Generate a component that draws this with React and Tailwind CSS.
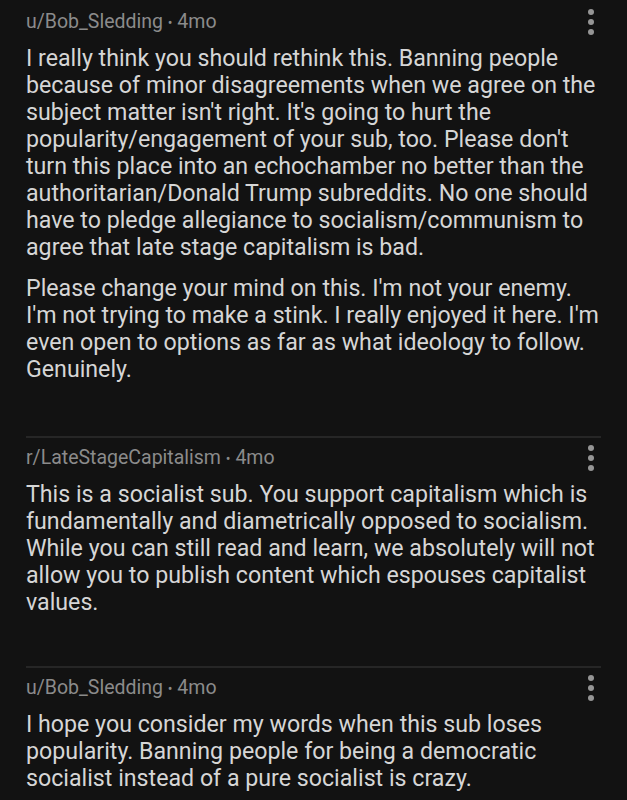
import React from "react";

const comments = [
  {
    author: "u/Bob_Sledding",
    age: "4mo",
    pad: "pt-[9px] pb-[53px]",
    paragraphs: [
      [
        "I really think you should rethink this. Banning people",
        "because of minor disagreements when we agree on the",
        "subject matter isn't right. It's going to hurt the",
        "popularity/engagement of your sub, too. Please don't",
        "turn this place into an echochamber no better than the",
        "authoritarian/Donald Trump subreddits. No one should",
        "have to pledge allegiance to socialism/communism to",
        "agree that late stage capitalism is bad.",
      ],
      [
        "Please change your mind on this. I'm not your enemy.",
        "I'm not trying to make a stink. I really enjoyed it here. I'm",
        "even open to options as far as what ideology to follow.",
        "Genuinely.",
      ],
    ],
  },
  {
    author: "r/LateStageCapitalism",
    age: "4mo",
    pad: "pt-[7px] pb-[50px]",
    paragraphs: [
      [
        "This is a socialist sub. You support capitalism which is",
        "fundamentally and diametrically opposed to socialism.",
        "While you can still read and learn, we absolutely will not",
        "allow you to publish content which espouses capitalist",
        "values.",
      ],
    ],
  },
  {
    author: "u/Bob_Sledding",
    age: "4mo",
    pad: "pt-[7px] pb-[40px]",
    paragraphs: [
      [
        "I hope you consider my words when this sub loses",
        "popularity. Banning people for being a democratic",
        "socialist instead of a pure socialist is crazy.",
      ],
    ],
  },
];

function MoreDots() {
  return (
    <div className="flex flex-col items-center gap-[4px] pr-[7px]">
      <span className="block size-[6px] rounded-full bg-[#959595]" />
      <span className="block size-[6px] rounded-full bg-[#959595]" />
      <span className="block size-[6px] rounded-full bg-[#959595]" />
    </div>
  );
}

function Comment({ comment, first }) {
  return (
    <div className="px-[26px]">
      {!first && <div className="h-[2px] bg-[#262626]" />}
      <div className={comment.pad}>
        <div className="flex items-center justify-between">
          <p className="text-[19.5px] leading-[24px] text-[#8b8b8b]">
            {comment.author} <span className="text-[14px]">•</span> {comment.age}
          </p>
          <MoreDots />
        </div>
        <div className="mt-[10px] flex flex-col gap-[14px]">
          {comment.paragraphs.map((lines, i) => (
            <p key={i} className="text-[23.2px] leading-[27px] text-[#d6d6d6]">
              {lines.map((line, j) => (
                <span key={j} className="block whitespace-nowrap">
                  {line}
                </span>
              ))}
            </p>
          ))}
        </div>
      </div>
    </div>
  );
}

export default function App() {
  return (
    <div
      className="h-[800px] w-[627px] overflow-hidden bg-[#121212]"
      style={{ fontFamily: "Roboto, 'Noto Sans', sans-serif" }}
    >
      {comments.map((c, i) => (
        <Comment key={i} comment={c} first={i === 0} />
      ))}
    </div>
  );
}
